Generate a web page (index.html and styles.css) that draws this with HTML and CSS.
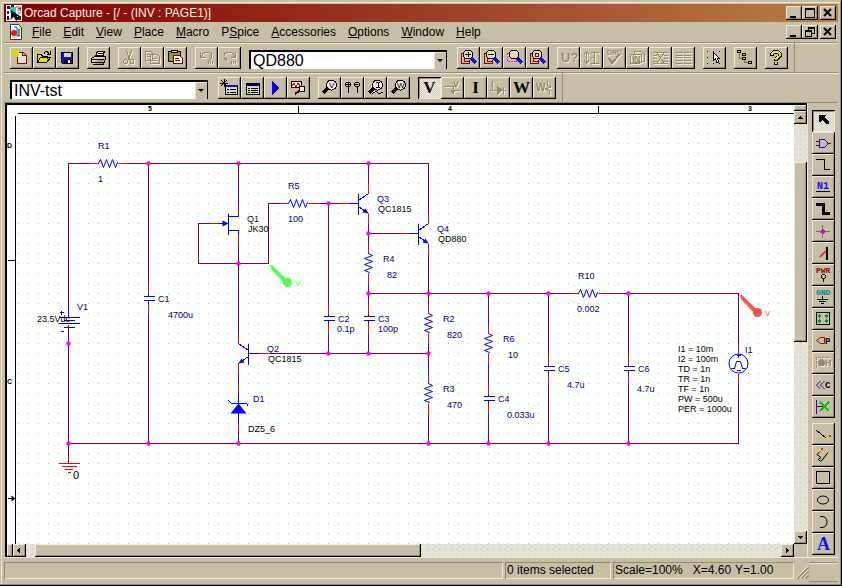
FILE: index.html
```html
<!DOCTYPE html>
<html lang="en">
<head>
<meta charset="utf-8">
<title>Orcad Capture - [/ - (INV : PAGE1)]</title>
<link rel="stylesheet" href="styles.css">
</head>
<body>
<div class="window">
  <header class="titlebar">
    <svg class="app-icon" viewBox="0 0 16 16" aria-hidden="true"><path fill="#fff" d="M0 0h16v16H0z"/><path fill="#222" d="M1 1h3v3H1zM5 0h3v2H5zM1 6h2v3H1zM1 11h2v4H1zM12 11h3v4h-3z"/><path fill="#20c8d0" d="M4 2h6v6H4z"/><path d="M5 5v9l3-2 2 4 3-2-2-3h3z"/><path stroke="#e02020" fill="none" d="M10 2h4M11 5h3M14.500 2v4"/><path stroke="#2040e0" fill="none" d="M12 8h3M12 3.500h2M4 13v2"/></svg>
    <h1>Orcad Capture - [/ - (INV : PAGE1)]</h1>
    <div class="captions">
      <button class="cap" aria-label="Minimize"><svg viewBox="0 0 16 14"><path d="M4 10h6v2H4z"/></svg></button><button class="cap" aria-label="Maximize"><svg viewBox="0 0 16 14"><path fill-rule="evenodd" d="M3 2h10v10H3zM4 4v7h8V4z"/></svg></button>
      <button class="cap cap-close" aria-label="Close"><svg viewBox="0 0 16 14"><path class="x" d="M4 3l7 7M11 3l-7 7"/></svg></button>
    </div>
  </header>
  <nav class="menubar">
    <svg class="doc-icon" viewBox="0 0 12 16" aria-hidden="true"><path fill="#fff" stroke="#333" d="M.5.5h8l3 3v12H.5z"/><circle cx="4" cy="9" r="3" fill="#e81010"/><path stroke="#28c028" stroke-width="2" d="M9 5v7"/><path stroke="#2040f0" fill="none" d="M4 3h3v9h3"/><path stroke="#d0c010" d="M8 4h3M2 13h5"/></svg>
    <button><u>F</u>ile</button><button><u>E</u>dit</button><button><u>V</u>iew</button><button><u>P</u>lace</button><button><u>M</u>acro</button><button>P<u>S</u>pice</button><button><u>A</u>ccessories</button><button><u>O</u>ptions</button><button><u>W</u>indow</button><button><u>H</u>elp</button>
    <div class="captions">
      <button class="cap" aria-label="Minimize page"><svg viewBox="0 0 16 14"><path d="M4 10h6v2H4z"/></svg></button><button class="cap" aria-label="Restore page"><svg viewBox="0 0 16 14"><path fill-rule="evenodd" d="M6 2h7v7h-3v3H3V5h3zM7 4v1h3v3h2V4zM4 7v4h5V7z"/></svg></button>
      <button class="cap cap-close" aria-label="Close page"><svg viewBox="0 0 16 14"><path class="x" d="M4 3l7 7M11 3l-7 7"/></svg></button>
    </div>
  </nav>

  <div class="toolrow"><div class="toolbar">
    <div class="group">
      <button class="tb" aria-label="New"><svg viewBox="0 0 23 22"><path fill="#e8e2d0" stroke="#900000" d="M8.500 5.500h5l3 3v8h-9v-7M12.500 5.500v3h3"/><path stroke="#e0d800" stroke-width="1.500" d="M3 3l6 6M9 3L3 9M6 3v7M2 6h6"/></svg></button>
      <button class="tb" aria-label="Open"><svg viewBox="0 0 23 22"><path fill="#e8e000" stroke="#000" d="M4.500 15.500v-8h4l1 2h5v2M4.500 15.500l3-5h10l-4 5z"/><path fill="none" stroke="#000" d="M11 6.500c1-3 4-2 5 0M17.500 4v3H14"/></svg></button>
      <button class="tb" aria-label="Save"><svg viewBox="0 0 23 22"><path fill="#1010e0" stroke="#000" d="M5.500 5.500h11v11h-10l-1-1z"/><path fill="#d8d4c4" d="M8 6h7v4H8z"/><path d="M8 12h7v5H8z"/><path fill="#eee" d="M12 13h2v3h-2z"/></svg></button>
    </div>
    <div class="group"><button class="tb" aria-label="Print"><svg viewBox="0 0 23 22"><path fill="#fff" stroke="#000" d="M8.500 10l2-6h7l-2 6z"/><path stroke="#000" d="M11 6.500h5M10 8.500h5"/><path fill="#ddd6c0" stroke="#000" d="M4.500 11.500l3-2h11l-2 6h-12z"/><path fill="#aaa388" stroke="#000" d="M5 15.500h12l2-5M6 17.500h10v-3"/><path stroke="#000" d="M4 12.500h13"/></svg></button></div>
    <div class="group">
      <button class="tb" aria-label="Cut" disabled><svg viewBox="0 0 23 22"><path class="d" d="M8 3l4 10M14 3l-4 10"/><circle class="d" cx="7.500" cy="14.500" r="2"/><circle class="d" cx="14" cy="14.500" r="2"/></svg></button>
      <button class="tb" aria-label="Copy" disabled><svg viewBox="0 0 23 22"><path class="d" d="M4.500 4.500h5l2 2v7h-7zM9.500 7.500h6l3 2v7h-9zM6 7.500h3M6 9.500h3M11 11.500h5M11 13.500h5"/></svg></button>
      <button class="tb" aria-label="Paste"><svg viewBox="0 0 23 22"><path fill="#a09820" stroke="#000" d="M4.500 4.500h12v10h-12z"/><path fill="#e8e040" stroke="#000" d="M7.500 5.500v-2h6v2z"/><path fill="#fff" stroke="#900000" d="M9.500 8.500h6l3 3v5h-9zM11 11.500h4M11 13.500h5"/></svg></button>
    </div>
    <div class="group">
      <button class="tb" aria-label="Undo" disabled><svg viewBox="0 0 23 22"><path class="d" d="M5.500 5v5.500h5M6 10c2-7 12-6 11 0l-3 4"/><path class="d dots" d="M13 15.500h6"/></svg></button>
      <button class="tb" aria-label="Redo" disabled><svg viewBox="0 0 23 22"><path class="d" d="M17.500 5v5.500h-5M17 10C15 3 5 4 6 10l3 4"/><path class="d dots" d="M13 15.500h6"/></svg></button>
    </div>
    <div class="combo"><select aria-label="Part"><option>QD880</option></select><span class="drop" aria-hidden="true"></span></div>
    <div class="group">
      <button class="tb" aria-label="Zoom in"><svg viewBox="0 0 23 22"><path class="pg" d="M8 6.500H4.500v10h8v-4M7.500 7v7h5"/><path class="hd" d="M14 11l5 5"/><circle class="lens" cx="11" cy="7.500" r="4.500"/><path class="k" d="M8 7.500h6M11 5v5"/></svg></button>
      <button class="tb" aria-label="Zoom out"><svg viewBox="0 0 23 22"><path class="pg" d="M8 6.500H4.500v10h8v-4M7.500 7v7h5"/><path class="hd" d="M14 11l5 5"/><circle class="lens" cx="11" cy="7.500" r="4.500"/><path class="k" d="M8 7.500h6"/></svg></button>
      <button class="tb" aria-label="Zoom to region"><svg viewBox="0 0 23 22"><path stroke="#f020f0" fill="none" stroke-dasharray="2 1" d="M4.500 6.500h9v8h-9z"/><path class="hd" d="M14 11l5 5"/><circle class="lens" cx="11" cy="7.500" r="4.500"/></svg></button>
      <button class="tb" aria-label="Zoom to all"><svg viewBox="0 0 23 22"><path class="pg" d="M8 6.500H4.500v10h8v-4M7.500 7v7h5"/><path class="hd" d="M14 11l5 5"/><circle class="lens" cx="11" cy="7.500" r="4.500"/><path class="pg" d="M9.500 6.500h3v3h-3z"/></svg></button>
    </div>
    <div class="group">
      <button class="tb" aria-label="Annotate" disabled><svg viewBox="0 0 23 22"><text class="dt" x="4" y="15" font-size="13">U?</text></svg></button>
      <button class="tb" aria-label="Back annotate" disabled><svg viewBox="0 0 23 22"><path class="d" d="M6.500 5v11M4 7.500l2.500-3 2.500 3M4 13.500l2.500 3 2.500-3M11 5.500h8M14.500 5.500v11M11 16.500h8M11 10.500h3"/></svg></button>
      <button class="tb" aria-label="Design rules check" disabled><svg viewBox="0 0 23 22"><text class="dt" x="4" y="8" font-size="7">DRC</text><path class="d" stroke-width="2" d="M6 11l3 5 8-9"/></svg></button>
      <button class="tb" aria-label="Create netlist" disabled><svg viewBox="0 0 23 22"><path class="d" d="M7 7.500H4.500v9h9V14M8.500 7V4.500h7l3 3v7H15M7.500 7.500h8v8h-8z"/><text class="dt" x="8" y="15" font-size="9">N</text></svg></button>
      <button class="tb" aria-label="Cross reference parts" disabled><svg viewBox="0 0 23 22"><path class="d" d="M4 5.500h15M4 8.500h4M15 8.500h4M4 11.500h4M15 11.500h4M4 14.500h4M15 14.500h4M4 16.500h15M8 6l7 10M15 6L8 16"/></svg></button>
      <button class="tb" aria-label="Bill of materials" disabled><svg viewBox="0 0 23 22"><path class="d" d="M4 5.500h7M4 8.500h7M4 10.500h7M4 13.500h7M4 16.500h7M12 5.500h7M12 8.500h7M12 10.500h7M12 13.500h7M12 16.500h7"/></svg></button>
    </div>
    <div class="group"><button class="tb" aria-label="Snap to grid"><svg viewBox="0 0 23 22"><path d="M4 4h1v1H4zM10 4h1v1h-1zM16 4h1v1h-1zM4 10h1v1H4zM4 16h1v1H4zM10 16h1v1h-1zM16 16h1v1h-1z"/><path fill="#fff" stroke="#000" d="M10.500 5.500v8l2-1.500 1.500 4 2-1-1.500-3.500h2z"/></svg></button></div>
    <div class="group"><button class="tb" aria-label="Project manager"><svg viewBox="0 0 23 22"><path fill="none" stroke="#777052" d="M5.500 6v5H9M10.500 12v3.500H14"/><path fill="#f0e800" stroke="#000" d="M3.500 3.500h3v2h-3zM8.500 6.500h3v2h-3zM8.500 10.500h3v2h-3zM14.500 14.500h3v2h-3z"/></svg></button></div>
    <div class="group"><button class="tb" aria-label="Help"><svg viewBox="0 0 23 22"><path fill="none" stroke="#000" stroke-width="4" d="M7 8.500c0-5 8-5 8 0 0 2-4 2-4 5M11 15v3"/><path fill="none" stroke="#f0e800" stroke-width="2" d="M7 8c0-4 8-4 8 0 0 2-4 2-4 4.500M11 15v2"/></svg></button></div>
  </div></div>

  <div class="toolrow"><div class="toolbar">
    <div class="combo"><select aria-label="Simulation profile"><option>INV-tst</option></select><span class="drop" aria-hidden="true"></span></div>
    <div class="group">
      <button class="tb" aria-label="New simulation profile"><svg viewBox="0 0 23 22"><path fill="#ddd6c0" stroke="#000" d="M7.500 8.500h12v9h-12z"/><path stroke="#1010e0" stroke-width="2" d="M8 9h11"/><path class="k" d="M9 12.500h2M12 12.500h6M9 15.500h2M12 15.500h6M3 3l6 6M9 3L3 9M6 2v8M2 6h8"/></svg></button>
      <button class="tb" aria-label="Edit simulation profile"><svg viewBox="0 0 23 22"><path fill="#ddd6c0" stroke="#000" d="M5.500 6.500h13v11h-13z"/><path stroke="#000070" stroke-width="2" d="M5 8h14"/><path class="k" d="M7 11.500h2M10 11.500h7M7 13.500h2M10 13.500h7M7 15.500h2M10 15.500h7"/></svg></button>
      <button class="tb" aria-label="Run"><svg viewBox="0 0 23 22"><path fill="#0808e8" d="M8 4l8 7-8 7z"/></svg></button>
      <button class="tb" aria-label="View results"><svg viewBox="0 0 23 22"><path fill="#eee9da" stroke="#000" d="M4.500 4.500h10v6h-10z"/><path stroke="#e01010" fill="none" d="M5 8.500l2-2 2 3 2-3 2 2"/><circle class="lt" cx="15" cy="12" r="3"/><path class="k" stroke-width="2" d="M12 14l-4 3"/></svg></button>
    </div>
    <div class="group">
      <button class="tb" aria-label="Voltage marker"><svg viewBox="0 0 23 22"><path class="k" stroke-width="3" d="M5 16l5-5"/><circle class="lt" cx="13.500" cy="8" r="5"/><text x="11" y="11" font-size="8">V</text></svg></button>
      <button class="tb" aria-label="Differential marker"><svg viewBox="0 0 23 22"><circle class="k" cx="7" cy="7.500" r="2.500"/><circle class="k" cx="16" cy="7.500" r="2.500"/><path class="k" d="M7.500 10v6M16.500 10v6M5 7.500h4M7 5v4M14 7.500h3"/></svg></button>
      <button class="tb" aria-label="Current marker"><svg viewBox="0 0 23 22"><path class="k" stroke-width="3" d="M5 16l5-5"/><circle class="lt" cx="13.500" cy="8" r="5"/><path class="k" d="M8 16.500l4-2 3 2 4-1M12 5.500h4M14 5v6M12 10.500h4"/></svg></button>
      <button class="tb" aria-label="Power marker"><svg viewBox="0 0 23 22"><path class="k" stroke-width="3" d="M5 16l5-5"/><circle class="lt" cx="13.500" cy="8" r="5"/><text x="10" y="11" font-size="8">W</text></svg></button>
    </div>
    <div class="group">
      <button class="tb serif pressed" aria-label="Show bias voltage" aria-pressed="true">V</button>
      <button class="tb" aria-label="Toggle net voltage" disabled><svg viewBox="0 0 23 22"><text class="dt" x="12" y="10" font-size="9">V</text><path class="d" d="M3 9.500h9v7M12 13.500h8M10 13l2 3 2-3"/></svg></button>
      <button class="tb serif" aria-label="Show bias current">I</button>
      <button class="tb" aria-label="Toggle pin current" disabled><svg viewBox="0 0 23 22"><text class="dt" x="4" y="10" font-size="9">I</text><path class="d" d="M3 13.500h16M5.500 10v3M16.500 10v7"/><path fill="#948c68" d="M10 9l6 4-6 5z"/></svg></button>
      <button class="tb serif" aria-label="Show bias power">W</button>
      <button class="tb" aria-label="Toggle part power" disabled><svg viewBox="0 0 23 22"><text class="dt" x="3" y="14" font-size="10">W</text><path class="d" d="M14.500 4v4l3 2-5 2 4 2v4"/></svg></button>
    </div>
  </div></div>

  <main class="workspace">
    <section class="pane" aria-label="Schematic page">
      <svg class="sheet" role="img" aria-label="INV schematic">
        <defs>
          <pattern id="grid" width="10" height="10" x="18" y="123" patternUnits="userSpaceOnUse"><path fill="#bcbcb4" d="M0 0h1v1H0z"/></pattern>
          <g id="res"><path class="pin" d="M-19 0h9M10 0h10"/><path class="zig" d="M-10 0l2-4 3 8 3-8 3 8 3-8 3 8 2-5 1 1"/></g>
          <g id="cap"><path class="pin" d="M0-14v9M0 5v10"/><path class="part" d="M0-5v3M-5-2h11M-5 2h11M0 2v3"/></g>
          <g id="npn"><path class="pin" d="M-19 0h9M10-20v10M10 10v10"/><path class="part" d="M-10 0H0M0-10v21M0-3l10-7M0 3l10 7"/><path class="fill" d="M10 10l-6-1 3-4z"/></g>
        </defs>
        <g transform="translate(-7 -105)">
          <rect x="16" y="114" width="3000" height="3000" fill="url(#grid)"/>
          <g transform="translate(.5 .5)">
            <path class="frame" d="M17 113h3000M15 115v3000M298 105v8M598 105v8M7 260h8M7 498h8"/>
            <path d="M11 495l4 3-4 3z"/>
            <g class="wires">
              <path d="M68 304V163H428V214M148 163V443M238 163V333M228 223H198V263H268V203H339M328 203V353M368 163V183M368 223V353M368 233H399M428 243V443M368 293H738V443H68M428 353H268M238 373V443M488 293V443M548 293V443M628 293V443M68 324V463"/>
            </g>
            <g class="mask"><path d="M98 163h20M288 203h20M578 293h20M368 253v20M428 313v20M428 383v20M488 333v20M148 296v4M328 316v4M368 316v4M488 396v4M548 366v4M628 366v4M238 213v20M738 354v19"/></g>
            <use href="#res" x="108" y="163"/><use href="#res" x="298" y="203"/><use href="#res" x="588" y="293"/>
            <use href="#res" transform="translate(368 263) rotate(90)"/><use href="#res" transform="translate(428 323) rotate(90)"/><use href="#res" transform="translate(428 393) rotate(90)"/><use href="#res" transform="translate(488 343) rotate(90)"/>
            <use href="#cap" x="148" y="298"/><use href="#cap" x="328" y="318"/><use href="#cap" x="368" y="318"/><use href="#cap" x="488" y="398"/><use href="#cap" x="548" y="368"/><use href="#cap" x="628" y="368"/>
            <use href="#npn" x="358" y="203"/><use href="#npn" x="418" y="233"/><use href="#npn" transform="translate(248 353) scale(-1 1)"/>
            <path class="pin" d="M209 223h9M238 204v9M238 234v10M238 384v9M238 423v10M738 344v9M738 373v10M58 463h21M61 466h15M64 469h8M67 472h3"/>
            <path class="part" d="M218 223h10M228 213v21M228 216h10v-3M228 230h10v4M68 304v13M58 317h21M63 320h11M58 323h21M63 327h11M59 312h4M61 310v4M60 331h3M238 393v10M238 413v10M228 400l3 3h15l2 3M736 355h4M738 353v4M736 370h4"/>
            <path class="fill" d="M222 220l6 3-6 3zM238 403l8 10h-16z"/>
            <circle class="ring" cx="738" cy="363" r="9.500"/>
            <path class="ring" d="M731 368h3l2-7h4l2 7h3"/>
            <g class="joint"><circle cx="148" cy="163" r="2"/><circle cx="238" cy="163" r="2"/><circle cx="368" cy="163" r="2"/><circle cx="328" cy="203" r="2"/><circle cx="368" cy="233" r="2"/><circle cx="238" cy="263" r="2"/><circle cx="368" cy="293" r="2"/><circle cx="428" cy="293" r="2"/><circle cx="488" cy="293" r="2"/><circle cx="548" cy="293" r="2"/><circle cx="628" cy="293" r="2"/><circle cx="68" cy="343" r="2"/><circle cx="328" cy="353" r="2"/><circle cx="368" cy="353" r="2"/><circle cx="428" cy="353" r="2"/><circle cx="68" cy="443" r="2"/><circle cx="148" cy="443" r="2"/><circle cx="238" cy="443" r="2"/><circle cx="428" cy="443" r="2"/><circle cx="488" cy="443" r="2"/><circle cx="548" cy="443" r="2"/><circle cx="628" cy="443" r="2"/></g>
            <g fill="#50ff50"><circle cx="287" cy="282" r="4.500"/><path d="M269 264l3 1 16 16-3 3-14-15z"/></g>
            <g fill="#ff5050"><circle cx="757" cy="312" r="4.500"/><path d="M739 294l3 1 16 16-3 3-14-15z"/></g>
          </g>
          <g class="ruler"><text x="148" y="111">5</text><text x="448" y="111">4</text><text x="748" y="111">3</text><text x="7" y="148">D</text><text x="7" y="384">C</text></g>
          <g class="label">
            <text x="98" y="149">R1</text><text x="98" y="182">1</text><text x="247" y="222">Q1</text><text x="288" y="189">R5</text><text x="288" y="222">100</text><text x="377" y="202">Q3</text><text x="437" y="232">Q4</text><text x="383" y="262">R4</text><text x="387" y="278">82</text><text x="158" y="302">C1</text><text x="168" y="318">4700u</text><text x="77" y="310">V1</text><text x="338" y="322">C2</text><text x="337" y="332">0.1p</text><text x="378" y="322">C3</text><text x="378" y="332">100p</text><text x="443" y="322">R2</text><text x="447" y="338">820</text><text x="267" y="352">Q2</text><text x="253" y="402">D1</text><text x="443" y="392">R3</text><text x="447" y="408">470</text><text x="503" y="342">R6</text><text x="508" y="358">10</text><text x="498" y="402">C4</text><text x="507" y="418">0.033u</text><text x="558" y="372">C5</text><text x="567" y="388">4.7u</text><text x="578" y="279">R10</text><text x="577" y="312">0.002</text><text x="638" y="372">C6</text><text x="637" y="392">4.7u</text><text x="745" y="353">I1</text>
          </g>
          <g class="label value">
            <text x="248" y="232">JK30</text><text x="378" y="212">QC1815</text><text x="438" y="242">QD880</text><text x="268" y="362">QC1815</text><text x="248" y="432">DZ5_6</text><text x="37" y="322">23.5Vdc</text><text class="gnd" x="73" y="479">0</text>
            <text x="678" y="352">I1 = 10m</text><text x="678" y="362">I2 = 100m</text><text x="678" y="372">TD = 1n</text><text x="678" y="382">TR = 1n</text><text x="678" y="392">TF = 1n</text><text x="678" y="402">PW = 500u</text><text x="678" y="412">PER = 1000u</text>
          </g>
          <g class="probe"><text x="295" y="286" fill="#50ff50">V</text><text x="765" y="316" fill="#ff5050">V</text></g>
        </g>
      </svg>
      <div class="vbar">
        <span class="split"></span><button class="sb" aria-label="Scroll up"><svg viewBox="0 0 13 13"><path d="M6 5h1v1h1v1h1v1H4V7h1V6h1z"/></svg></button>
        <span class="track v1"></span><span class="thumb vt"></span><span class="track v2"></span>
        <button class="sb" aria-label="Scroll down"><svg viewBox="0 0 13 13"><path d="M4 5h5v1H8v1H7v1H6V7H5V6H4z"/></svg></button>
      </div>
      <div class="hbar">
        <span class="split"></span><button class="sb" aria-label="Scroll left"><svg viewBox="0 0 13 13"><path d="M7 4v5H6V8H5V7H4V6h1V5h1V4z"/></svg></button>
        <span class="track h1"></span><span class="thumb ht"></span><span class="track h2"></span>
        <button class="sb" aria-label="Scroll right"><svg viewBox="0 0 13 13"><path d="M5 4v5h1V8h1V7h1V6H7V5H6V4z"/></svg></button>
      </div>
    </section>
    <aside class="palette" aria-label="Drawing tools">
      <button class="tb pressed" aria-label="Select" aria-pressed="true"><svg viewBox="0 0 23 22"><path d="M7 5h7l-2 2 5 5v2h-2l-5-4-2 2H7z"/></svg></button>
      <button class="tb" aria-label="Place part"><svg viewBox="0 0 23 22"><path stroke="#900000" d="M4 9.500h4M4 13.500h4M15 11.500h4"/><path fill="none" stroke="#1010f0" d="M7.500 7.500h5l3 3v2l-3 3h-5z"/></svg></button>
      <button class="tb" aria-label="Place wire"><svg viewBox="0 0 23 22"><path class="k" d="M4 5.500h8.500v10H18"/></svg></button>
      <button class="tb" aria-label="Place net alias"><svg viewBox="0 0 23 22"><text class="pix" x="5" y="13" font-size="10" fill="#1010f0">N1</text><path class="k" d="M4 15.500h14"/></svg></button>
      <button class="tb" aria-label="Place bus"><svg viewBox="0 0 23 22"><path class="k" stroke-width="3" d="M4 6.500h7.500v9H18"/></svg></button>
      <button class="tb" aria-label="Place junction"><svg viewBox="0 0 23 22"><path stroke="#777052" d="M4 11.500h14M10.500 5v13"/><path fill="#e000e0" d="M10 9h2v1h1v3h-1v1h-2v-1H8v-2h1v-1h1z"/></svg></button>
      <button class="tb" aria-label="Place bus entry"><svg viewBox="0 0 23 22"><path class="k" stroke-width="2" d="M15 5v13"/><path class="smooth" stroke="#f01010" stroke-width="1.500" d="M8 15l6-6"/></svg></button>
      <button class="tb" aria-label="Place power"><svg viewBox="0 0 23 22"><text class="pix" x="4" y="9" font-size="8" fill="#900000">PWR</text><circle class="k" cx="11.500" cy="12.500" r="2"/><path class="k" d="M11.500 15v3"/></svg></button>
      <button class="tb" aria-label="Place ground"><svg viewBox="0 0 23 22"><text class="pix" x="4" y="9" font-size="8" fill="#008890">GND</text><path class="k" d="M10.500 10v3M5 13.500h11M7 15.500h7M9 17.500h3"/></svg></button>
      <button class="tb" aria-label="Place hierarchical block"><svg viewBox="0 0 23 22"><path class="k" d="M4.500 4.500h13v12h-13z"/><path fill="#109010" d="M6 7h3v2H6zM13 7h3v2h-3zM6 12h3v2H6zM13 12h3v2h-3zM7 6h1v4H7zM14 6h1v4h-1zM7 11h1v4H7zM14 11h1v4h-1z"/></svg></button>
      <button class="tb" aria-label="Place port"><svg viewBox="0 0 23 22"><path class="smooth" fill="none" stroke="#b00000" d="M4.500 10.500l4-3h4v6h-4z"/><text class="pix" x="13" y="14" font-size="9">P</text></svg></button>
      <button class="tb" aria-label="Place pin" disabled><svg viewBox="0 0 23 22"><path class="d" stroke-dasharray="3 1" d="M4.500 16V5.500H18"/><circle cx="9.500" cy="10.500" r="3.500" fill="#948c68"/><text class="dt" x="13" y="14" font-size="9">H</text></svg></button>
      <button class="tb" aria-label="Place off-page connector"><svg viewBox="0 0 23 22"><path class="smooth" fill="none" stroke="#1818b0" d="M8.500 7l-4 4 4 4M12.500 7l-4 4 4 4"/><text class="pix" x="13" y="14" font-size="9">C</text></svg></button>
      <button class="tb" aria-label="Place no connect"><svg viewBox="0 0 23 22"><path stroke="#1010f0" d="M4.500 4v14"/><path stroke="#900000" d="M5 10.500h8"/><path stroke="#10c010" stroke-width="2" d="M8 6l9 9M17 6l-9 9"/></svg></button>
      <button class="tb gap" aria-label="Place line"><svg viewBox="0 0 23 22"><path class="k" d="M4 7l10 8"/><path stroke="#f0e000" stroke-width="2" d="M14 15l4-2"/><path stroke="#f02020" stroke-width="2" d="M17 13h2"/></svg></button>
      <button class="tb" aria-label="Place polyline"><svg viewBox="0 0 23 22"><path class="k smooth" d="M8 6.500l-3 3 4 3-3 2 3 2 7-9"/><path stroke="#f0e000" stroke-width="2" d="M6 6l4-2"/><path stroke="#f02020" stroke-width="2" d="M9 4h2"/></svg></button>
      <button class="tb" aria-label="Place rectangle"><svg viewBox="0 0 23 22"><path class="k" d="M4.500 4.500h13v12h-13z"/></svg></button>
      <button class="tb" aria-label="Place ellipse"><svg viewBox="0 0 23 22"><ellipse class="k smooth" cx="11" cy="11" rx="5.500" ry="4"/></svg></button>
      <button class="tb" aria-label="Place arc"><svg viewBox="0 0 23 22"><path class="k smooth" d="M8 5.500h2c3 0 5 2 5 5.500s-2 5.500-5 5.500H8"/></svg></button>
      <button class="tb serif blue" aria-label="Place text">A</button>
    </aside>
  </main>

  <footer class="status">
    <span class="cell wide"></span><span class="cell items">0 items selected</span><span class="cell scale"><span>Scale=100%</span><span class="xy">X=4.60</span><span class="y">Y=1.00</span></span>
    <svg class="grip" viewBox="0 0 13 13" aria-hidden="true"><path stroke="#f0ecdf" d="M0 12L12 0M4 12l8-8M8 12l4-4"/><path stroke="#948c68" stroke-width="1.500" d="M1.500 12.500l11-11M5.500 12.500l7-7M9.500 12.500l3-3"/></svg>
    <span class="dock"></span>
  </footer>
</div>
</body>
</html>
```
FILE: styles.css
```css
:root {
  --face: #c6bfa6;
  --light: #ece8dc;
  --shade: #948c68;
  --track: #e4e1d5;
}
* { box-sizing: border-box; }
body {
  margin: 0;
  font: 12px/16px "Liberation Sans", Arial, sans-serif;
  color: #000;
}
button { font: inherit; color: inherit; background: none; border: 0; padding: 0; margin: 0; }
svg { display: block; }
.window {
  display: flex;
  flex-direction: column;
  height: 100vh;
  padding: 4px;
  background: var(--face);
  box-shadow: inset -1px -1px #000, inset 0 1px var(--face), inset -2px -2px var(--shade), inset 1px 2px var(--face), inset 2px 3px var(--light);
}

/* Title and menu */
.titlebar {
  display: flex;
  align-items: center;
  height: 18px;
  flex: none;
  padding: 0 2px;
  background: linear-gradient(90deg, #820000, #9c3c24 50%, #b87e46);
  color: #f4efe2;
}
.titlebar h1 { margin: 0 0 0 2px; font: inherit; }
.app-icon { width: 16px; height: 16px; }
.captions { display: flex; margin-left: auto; }
.cap {
  width: 16px;
  height: 14px;
  background: var(--face);
  box-shadow: inset -1px -1px #000, inset 1px 1px var(--light), inset -2px -2px var(--shade);
}
.cap svg { width: 16px; height: 14px; }
.cap-close { margin-left: 2px; }
.x { stroke: #000; stroke-width: 2; }
.menubar {
  display: flex;
  align-items: center;
  flex: none;
  height: 20px;
  padding: 0 2px 0 6px;
}
.menubar > button { margin-right: 12px; }
.doc-icon { width: 12px; height: 16px; margin-right: 10px; }

/* Toolbars */
.toolrow {
  flex: none;
  height: 30px;
  border-top: 1px solid var(--shade);
  box-shadow: inset 0 1px var(--light);
}
.toolbar {
  display: flex;
  gap: 8px;
  width: max-content;
  height: 29px;
  padding: 4px 6px 0;
  border-right: 1px solid var(--shade);
}
.group { display: flex; }
.tb {
  flex: none;
  width: 23px;
  height: 22px;
  background: var(--face);
  box-shadow: inset -1px -1px #000, inset 1px 1px var(--light), inset -2px -2px var(--shade);
}
.tb svg { width: 23px; height: 22px; shape-rendering: crispEdges; }
.tb:disabled svg { filter: drop-shadow(1px 1px 0 var(--light)); }
.tb .smooth { shape-rendering: geometricPrecision; }
.pressed {
  background: repeating-conic-gradient(#f0ede2 0 25%, #d2ccb8 0 50%) 0 0 / 2px 2px;
  box-shadow: inset 1px 1px #000, inset -1px -1px var(--light), inset 2px 2px var(--shade);
}
.serif { font: bold 17px/22px "Liberation Serif", "Times New Roman", serif; }
.blue { color: #1010f0; font-size: 18px; }
.k { fill: none; stroke: #000; }
.d { fill: none; stroke: var(--shade); }
.dots { stroke-dasharray: 1 1; stroke-width: 3; }
.dt { fill: var(--shade); font-weight: bold; }
.pg { fill: none; stroke: #900000; }
.hd { stroke: #1010e0; stroke-width: 3; }
.lens { fill: #ddd8c8; stroke: #000; }
.lt { fill: var(--light); stroke: #000; }
.pix { font-family: "Liberation Mono", "Courier New", monospace; font-weight: bold; }
.combo {
  display: flex;
  width: 200px;
  height: 19px;
  margin-top: 3px;
  padding-right: 2px;
}
.combo select {
  flex: 1;
  min-width: 0;
  appearance: none;
  border: 1px solid #000;
  border-width: 2px 0 0 2px;
  border-radius: 0;
  padding: 0 2px;
  background: #fff;
  color: #000;
  font: 16px/17px "Liberation Sans", Arial, sans-serif;
}
.drop {
  display: grid;
  place-items: center;
  width: 13px;
  border-top: 2px solid #000;
  border-right: 1px solid #000;
  background: var(--face);
  box-shadow: inset 1px 1px var(--light);
}
.drop::after {
  content: "";
  border: 3px solid transparent;
  border-top-color: #000;
  border-bottom-width: 0;
}

/* Schematic pane */
.workspace { display: flex; flex: 1; min-height: 0; border-top: 1px solid var(--shade); }
.pane {
  flex: 1;
  display: grid;
  grid-template: minmax(0, 1fr) 13px / minmax(0, 1fr) 13px;
  min-width: 0;
  margin-left: 1px;
  border: solid #000;
  border-width: 2px 0 0 2px;
}
.sheet { width: 100%; height: 100%; background: #fdfffd; }
.vbar { display: flex; flex-direction: column; min-height: 0; }
.hbar { display: flex; min-width: 0; }
.split, .sb, .thumb {
  flex: none;
  background: var(--face);
  box-shadow: inset -1px -1px #000, inset 1px 1px var(--light), inset -2px -2px var(--shade);
}
.sb { width: 13px; height: 13px; }
.sb svg { width: 13px; height: 13px; }
.vbar .split { height: 6px; }
.hbar .split { width: 6px; }
.track {
  background: linear-gradient(#cbc7b9, #cbc7b9) 0 0 / 1px 1px no-repeat, conic-gradient(from 0deg at 1px 1px, transparent 270deg, #cbc7b9 0) 0 0 / 6px 5px var(--track);
}
.thumb.vt { flex: 180 1 0; }
.thumb.ht { flex: 386 1 0; }
.v1 { flex: 38 1 0; }
.v2 { flex: 189 1 0; }
.h1 { flex: 9 1 0; }
.h2 { flex: 360 1 0; }
.frame { fill: none; stroke: #000; shape-rendering: crispEdges; }
.wires { fill: none; stroke: #800048; shape-rendering: crispEdges; }
.mask { fill: none; stroke: #fdfffd; shape-rendering: crispEdges; }
.pin { fill: none; stroke: #ff0000; shape-rendering: crispEdges; }
.part { fill: none; stroke: #0000ff; shape-rendering: crispEdges; }
.zig { fill: none; stroke: #0000ff; }
.ring { fill: none; stroke: #0000ff; }
.fill { fill: #0000ff; }
.joint { fill: #ff00ff; stroke: #ff00ff; stroke-width: 0.5; }
.label { font-size: 9px; fill: #000080; }
.value { fill: #000; }
.gnd { font-size: 11px; }
.ruler { font-size: 7px; font-weight: bold; }
.probe { font-size: 8px; }

/* Drawing palette */
.palette {
  display: flex;
  flex-direction: column;
  width: 31px;
  flex: none;
  padding: 7px 0 0 4px;
  border-left: 1px solid var(--light);
}
.gap { margin-top: 5px; }

/* Status bar */
.status { display: flex; flex: none; height: 25px; padding-top: 4px; border-top: 1px solid var(--light); }
.cell {
  height: 17px;
  margin-right: 2px;
  padding-left: 2px;
  white-space: nowrap;
  box-shadow: inset 1px 1px var(--shade), inset -1px -1px var(--light);
}
.wide { flex: 1; }
.items { width: 106px; }
.scale { display: flex; width: 181px; }
.xy { margin-left: 10px; }
.y { margin-left: 4px; }
.grip { width: 13px; height: 13px; margin-top: 4px; }
.dock { width: 29px; height: 20px; border: solid var(--shade); border-width: 1px 0; box-shadow: inset 0 1px var(--light); }
```
